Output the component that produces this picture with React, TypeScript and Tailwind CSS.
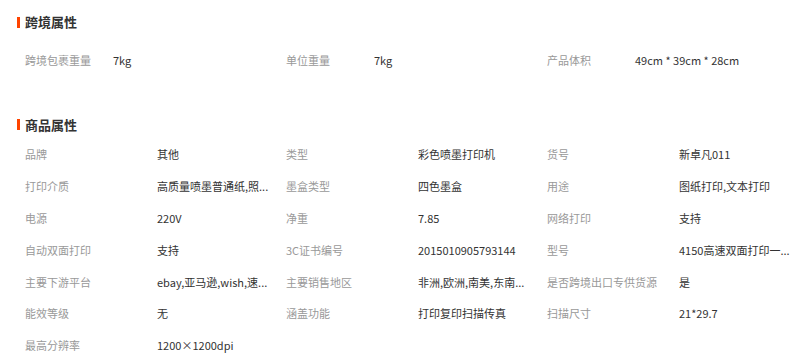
const crossBorder: [string, string][] = [
  ["跨境包裹重量", "7kg"],
  ["单位重量", "7kg"],
  ["产品体积", "49cm * 39cm * 28cm"],
];

// values are shown already clipped, the way the listing page cuts them
const productAttrs: [string, string][] = [
  ["品牌", "其他"],
  ["类型", "彩色喷墨打印机"],
  ["货号", "新卓凡011"],
  ["打印介质", "高质量喷墨普通纸,照..."],
  ["墨盒类型", "四色墨盒"],
  ["用途", "图纸打印,文本打印"],
  ["电源", "220V"],
  ["净重", "7.85"],
  ["网络打印", "支持"],
  ["自动双面打印", "支持"],
  ["3C证书编号", "2015010905793144"],
  ["型号", "4150高速双面打印一..."],
  ["主要下游平台", "ebay,亚马逊,wish,速..."],
  ["主要销售地区", "非洲,欧洲,南美,东南..."],
  ["是否跨境出口专供货源", "是"],
  ["能效等级", "无"],
  ["涵盖功能", "打印复印扫描传真"],
  ["扫描尺寸", "21*29.7"],
  ["最高分辨率", "1200×1200dpi"],
];

function SectionTitle({ text }: { text: string }) {
  return (
    <div className="flex h-[20px] items-center pl-[17px]">
      <span className="inline-block h-[11px] w-[3px] bg-[#ff4400]" />
      <span className="ml-[5px] text-[13px] font-bold text-[#333]">{text}</span>
    </div>
  );
}

function AttrGrid({
  items,
  labelWidth,
}: {
  items: [string, string][];
  labelWidth: string;
}) {
  return (
    <div className="grid grid-cols-[261px_261px_261px] pl-[25px]">
      {items.map(([label, value]) => (
        <div key={label} className="flex h-[31.8px] items-center text-[11px]">
          <span className={`${labelWidth} shrink-0 whitespace-nowrap text-[#999]`}>{label}</span>
          <span className="whitespace-nowrap text-[#333]">{value}</span>
        </div>
      ))}
    </div>
  );
}

export default function App() {
  return (
    <div
      className="h-[362px] w-[800px] overflow-hidden bg-white pt-[12px]"
      style={{ fontFamily: '"Noto Sans CJK SC", "Noto Sans", sans-serif' }}
    >
      <SectionTitle text="跨境属性" />
      <div className="mt-[12px]">
        <AttrGrid items={crossBorder} labelWidth="w-[88px]" />
      </div>
      <div className="mt-[39px]">
        <SectionTitle text="商品属性" />
      </div>
      <div className="mt-[4px]">
        <AttrGrid items={productAttrs} labelWidth="w-[132px]" />
      </div>
    </div>
  );
}
